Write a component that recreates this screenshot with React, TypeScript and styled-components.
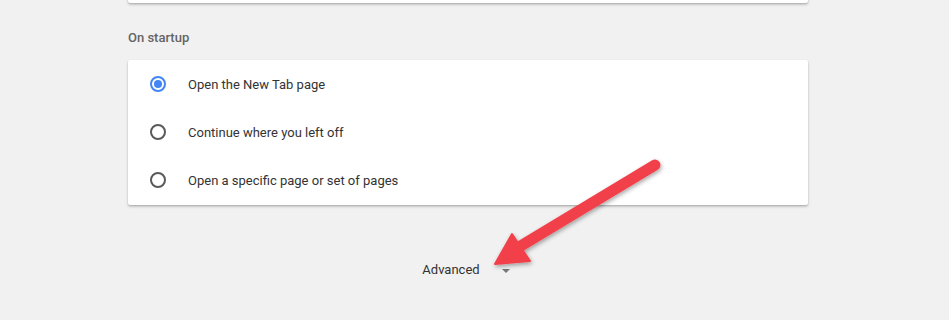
import styled, { createGlobalStyle } from 'styled-components'

const GlobalStyle = createGlobalStyle`
  html, body {
    margin: 0;
    padding: 0;
    background: #f1f1f1;
    font-family: Roboto, "Liberation Sans", Arial, sans-serif;
  }
`

const Page = styled.div`
  position: relative;
  width: 949px;
  height: 320px;
  overflow: hidden;
  background: #f1f1f1;
`

const Column = styled.div`
  width: 680px;
  margin-left: 128px;
  display: flex;
  flex-direction: column;
`

const Card = styled.div`
  background: #fff;
  border-radius: 2px;
  box-shadow: 0 1px 2px rgba(0, 0, 0, 0.2), 0 2px 3px rgba(0, 0, 0, 0.12);
`

const PrevCard = styled(Card)`
  margin-top: -40px;
  height: 43px;
`

const OptionsCard = styled(Card)`
  padding-bottom: 1px;
`

const SectionTitle = styled.div`
  font-size: 13px;
  font-weight: 500;
  color: #646464;
  height: 20px;
  line-height: 20px;
  margin: 25px 0 12px;
`

const Row = styled.label`
  height: 48px;
  display: flex;
  align-items: center;
  gap: 20px;
  padding-left: 20px;
  font-size: 13px;
  color: #333;
`

const Radio = styled.span<{ $checked?: boolean }>`
  width: 16px;
  height: 16px;
  margin: 0 2px;
  box-sizing: border-box;
  border-radius: 50%;
  border: 2px solid ${p => (p.$checked ? '#4285f4' : '#5a5a5a')};
  display: flex;
  align-items: center;
  justify-content: center;

  &::after {
    content: '';
    width: 8px;
    height: 8px;
    border-radius: 50%;
    background: #4285f4;
    display: ${p => (p.$checked ? 'block' : 'none')};
  }
`

const AdvancedRow = styled.div`
  display: flex;
  justify-content: center;
  margin-top: 54px;
  padding-right: 4px;
`

const AdvancedButton = styled.div`
  display: flex;
  align-items: center;
  gap: 22px;
  font-size: 13px;
  color: #333;
  height: 20px;
`

const Caret = styled.span`
  width: 0;
  height: 0;
  border-left: 4px solid transparent;
  border-right: 4px solid transparent;
  border-top: 4px solid #777;
  margin-top: 3px;
`

const Overlay = styled.svg`
  position: absolute;
  left: 0;
  top: 0;
  pointer-events: none;
`

const options = [
  { label: 'Open the New Tab page', checked: true },
  { label: 'Continue where you left off', checked: false },
  { label: 'Open a specific page or set of pages', checked: false },
]

export default function App() {
  return (
    <Page>
      <GlobalStyle />
      <Column>
        <PrevCard />
        <SectionTitle>On startup</SectionTitle>
        <OptionsCard>
          {options.map(o => (
            <Row key={o.label}>
              <Radio $checked={o.checked} />
              <span>{o.label}</span>
            </Row>
          ))}
        </OptionsCard>
        <AdvancedRow>
          <AdvancedButton>
            <span>Advanced</span>
            <Caret />
          </AdvancedButton>
        </AdvancedRow>
      </Column>
      <Overlay width="949" height="320" viewBox="0 0 949 320">
        <defs>
          <filter id="sh" x="-20%" y="-20%" width="140%" height="140%">
            <feDropShadow dx="1" dy="2" stdDeviation="2" floodColor="#000" floodOpacity="0.35" />
          </filter>
        </defs>
        <g filter="url(#sh)" fill="#f2414b" stroke="#f2414b">
          <line x1="655" y1="165" x2="519" y2="247" strokeWidth="11" strokeLinecap="round" />
          <polygon points="495,264 512,234 530,261" strokeWidth="2" strokeLinejoin="round" />
        </g>
      </Overlay>
    </Page>
  )
}
